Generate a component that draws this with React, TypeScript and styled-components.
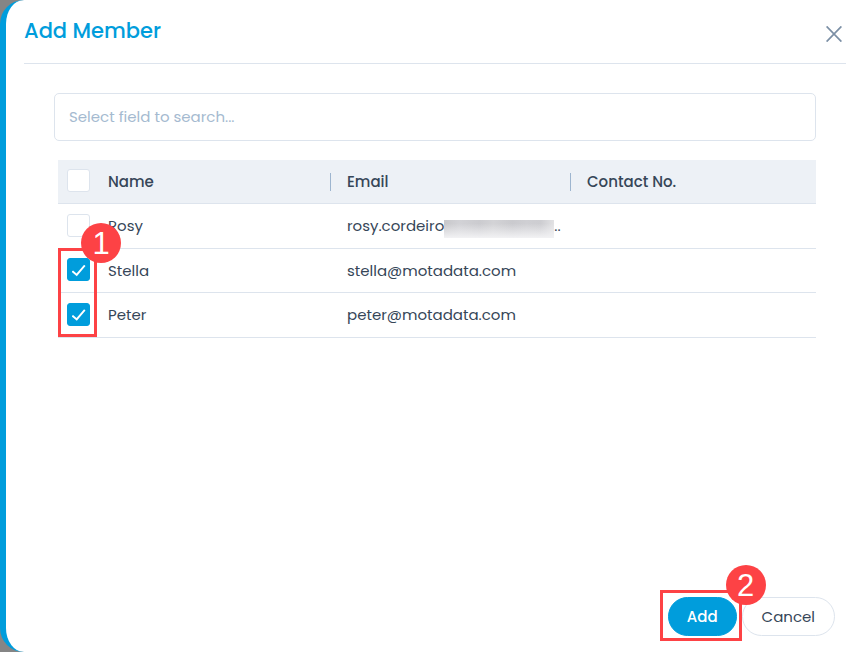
import React, { useState } from "react";
import styled, { createGlobalStyle } from "styled-components";

const blue = "#009ddc";
const red = "#fd4245";
const line = "#dde4ed";
const ink = "#364658";

const GlobalStyle = createGlobalStyle`
  *, *::before, *::after { box-sizing: border-box; }
  body {
    margin: 0;
    background: #858585;
    color: ${ink};
    font-family: Poppins, Inter, sans-serif;
    font-size: 15px;
  }
`;

const Drawer = styled.section`
  display: flex;
  flex-direction: column;
  min-height: 100vh;
  border-left: 6px solid ${blue};
  border-radius: 24px 0 0 24px;
  background: #fff;
`;

const Header = styled.header`
  display: flex;
  align-items: center;
  justify-content: space-between;
  height: 64px;
  margin: 0 15px 0 18px;
  border-bottom: 1px solid ${line};
`;

const Title = styled.h1`
  margin: 0;
  padding-bottom: 2px;
  color: ${blue};
  font-size: 21px;
  font-weight: 500;
  line-height: 32px;
`;

const CloseButton = styled.button`
  display: flex;
  margin: 4px 4px 0 0;
  padding: 0;
  border: 0;
  background: none;
  color: #7b8fa5;
  cursor: pointer;
`;

const Content = styled.main`
  flex: 1;
  padding: 29px 45px 0 48px;
`;

const SearchInput = styled.input`
  display: block;
  width: 100%;
  height: 48px;
  padding: 0 14px 2px;
  border: 1px solid ${line};
  border-radius: 5px;
  background: #fff;
  color: ${ink};
  font: inherit;
  &::placeholder { color: #a5bad0; opacity: 1; }
`;

const TableArea = styled.div`
  position: relative;
  margin: 19px 0 0 4px;
`;

const Table = styled.table`
  width: 100%;
  border-collapse: separate;
  border-spacing: 0;
  table-layout: fixed;
`;

const Column = styled.col<{ $width?: number }>`
  width: ${({ $width }) => ($width ? `${$width}px` : "auto")};
`;

const HeadCell = styled.th`
  height: 44px;
  padding: 0;
  border-bottom: 1px solid ${line};
  background: #edf1f6;
  font-weight: 500;
  text-align: left;
`;

const HeadLabel = styled.div<{ $divided?: boolean }>`
  padding-left: 16px;
  border-right: ${({ $divided }) => ($divided ? "1px solid #9db5cf" : "0")};
  line-height: 18px;
`;

const Cell = styled.td`
  height: 45px;
  padding: 0 0 0 16px;
  border-bottom: 1px solid ${line};
  line-height: 20px;
  white-space: nowrap;
  tr:nth-child(even) > & { height: 44px; }
`;

const CheckCell = styled(Cell)`
  padding: 0 0 2px 9px;
`;

const CheckHeadCell = styled(HeadCell)`
  padding: 0 0 2px 9px;
`;

const Checkbox = styled.input`
  display: grid;
  place-items: center;
  width: 23px;
  height: 23px;
  margin: 0;
  border: 1px solid ${line};
  border-radius: 3px;
  background: #fff;
  appearance: none;
  cursor: pointer;
  &:checked { border-color: ${blue}; background: ${blue}; }
  &:checked::before {
    content: "";
    width: 14px;
    height: 12px;
    margin-top: 2px;
    background: #fff;
    clip-path: polygon(0 60%, 11% 50%, 36% 75%, 90% 3%, 100% 12%, 38% 98%);
  }
`;

const Email = styled.div`
  display: flex;
  align-items: center;
`;

const Redaction = styled.span`
  width: 110px;
  height: 18px;
  margin-top: 6px;
  background:
    linear-gradient(transparent 20%, #f2f2f4 100%),
    linear-gradient(90deg, #c8c8cb, #d2d2d6 14%, #cbcbcf 32%, #d3d3d6 45%, #cacace 62%, #cfcfd3 75%, #cdcdd1 88%, #e2e2e4);
`;

const Footer = styled.footer`
  display: flex;
  justify-content: flex-end;
  gap: 5px;
  padding: 0 26px 16px;
`;

const ButtonSpot = styled.div`
  position: relative;
`;

const Button = styled.button<{ $primary?: boolean }>`
  height: 39px;
  padding: 0 ${({ $primary }) => ($primary ? 18 : 19)}px;
  border: 1px solid ${({ $primary }) => ($primary ? blue : line)};
  border-radius: 20px;
  background: ${({ $primary }) => ($primary ? blue : "#fff")};
  color: ${({ $primary }) => ($primary ? "#fff" : ink)};
  font: inherit;
  font-weight: ${({ $primary }) => ($primary ? 500 : 400)};
  cursor: pointer;
`;

const Callout = styled.div`
  position: absolute;
  z-index: 1;
  border: 3px solid ${red};
  pointer-events: none;
`;

const RowsCallout = styled(Callout)`
  top: 88px;
  bottom: 1px;
  left: 0;
  width: 39px;
`;

const AddCallout = styled(Callout)`
  inset: -7px -5px -5px -8px;
`;

const CalloutNumber = styled.span`
  position: absolute;
  top: -28px;
  right: -27px;
  width: 40px;
  height: 40px;
  border-radius: 50%;
  background: ${red};
  color: #fff;
  font: 31px/42px "Liberation Sans", Arial, sans-serif;
  text-align: center;
`;

interface Member {
  name: string;
  email: string;
  redacted?: boolean;
}

const members: Member[] = [
  { name: "Rosy", email: "rosy.cordeiro", redacted: true },
  { name: "Stella", email: "stella@motadata.com" },
  { name: "Peter", email: "peter@motadata.com" },
];

export default function App() {
  const [selected, setSelected] = useState<string[]>(["Stella", "Peter"]);
  const toggle = (name: string) =>
    setSelected((now) => (now.includes(name) ? now.filter((n) => n !== name) : [...now, name]));
  const all = selected.length === members.length;

  return (
    <>
      <GlobalStyle />
      <Drawer aria-labelledby="drawer-title">
        <Header>
          <Title id="drawer-title">Add Member</Title>
          <CloseButton type="button" aria-label="Close">
            <svg width="16" height="16" viewBox="0 0 16 16" fill="none" stroke="currentColor" strokeWidth="1.7">
              <path d="M0.6 0.4 15.4 15.6M15.4 0.4 0.6 15.6" />
            </svg>
          </CloseButton>
        </Header>
        <Content>
          <SearchInput type="text" aria-label="Search members" placeholder="Select field to search..." />
          <TableArea>
            <Table>
              <colgroup>
                <Column $width={34} />
                <Column $width={239} />
                <Column $width={240} />
                <Column />
              </colgroup>
              <thead>
                <tr>
                  <CheckHeadCell>
                    <Checkbox
                      type="checkbox"
                      aria-label="Select all"
                      checked={all}
                      onChange={() => setSelected(all ? [] : members.map((m) => m.name))}
                    />
                  </CheckHeadCell>
                  <HeadCell><HeadLabel $divided>Name</HeadLabel></HeadCell>
                  <HeadCell><HeadLabel $divided>Email</HeadLabel></HeadCell>
                  <HeadCell><HeadLabel>Contact No.</HeadLabel></HeadCell>
                </tr>
              </thead>
              <tbody>
                {members.map(({ name, email, redacted }) => (
                  <tr key={name}>
                    <CheckCell>
                      <Checkbox
                        type="checkbox"
                        aria-label={`Select ${name}`}
                        checked={selected.includes(name)}
                        onChange={() => toggle(name)}
                      />
                    </CheckCell>
                    <Cell>{name}</Cell>
                    <Cell>
                      <Email>
                        {email}
                        {redacted && <><Redaction />..</>}
                      </Email>
                    </Cell>
                    <Cell />
                  </tr>
                ))}
              </tbody>
            </Table>
            <RowsCallout><CalloutNumber>1</CalloutNumber></RowsCallout>
          </TableArea>
        </Content>
        <Footer>
          <ButtonSpot>
            <Button type="button" $primary>Add</Button>
            <AddCallout><CalloutNumber>2</CalloutNumber></AddCallout>
          </ButtonSpot>
          <Button type="button">Cancel</Button>
        </Footer>
      </Drawer>
    </>
  );
}
